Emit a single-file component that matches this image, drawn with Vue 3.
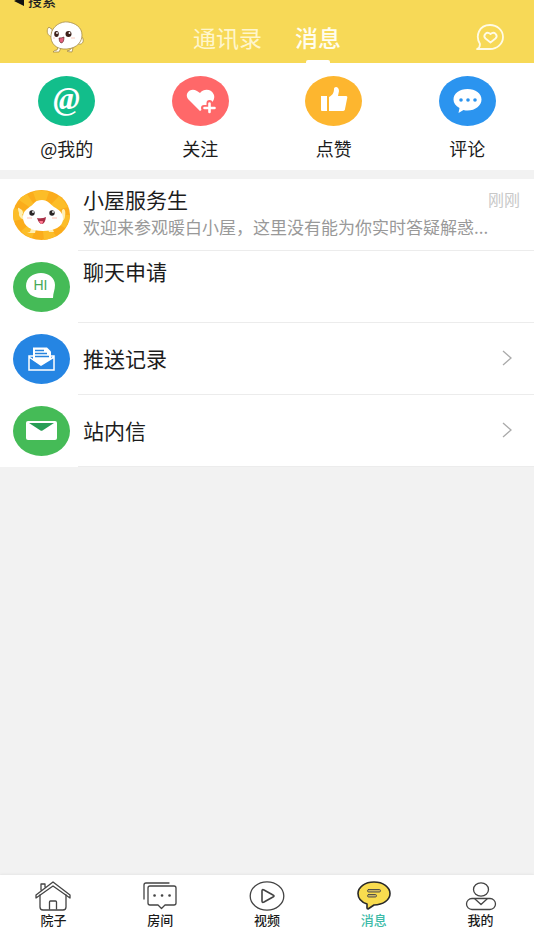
<template>
  <div class="page">
    <header class="header">
      <div class="status"><span class="back-mark"></span><span class="back-text">搜索</span></div>
      <div class="nav-bar">
        <button class="mascot-btn" type="button" aria-label="暖白小屋">
          <svg width="40" height="34" viewBox="0 0 40 34">
            <g fill="#fffdf5" stroke="#a68c45" stroke-width="0.8">
              <path d="M7 17C3 16 1 12 3 8q1-2 2 0l2 1q1 3-1 4l3 3zM34 18q4-2 4 1c1 3-1 6-5 5zM13 27l-1 3q-3 0-4 2h6l2-4zM26 28l-1 2-3 1q1 1 5 1l1-4z" />
              <path d="M6 15C7 6 16 1 23 2s14 5 14 13c0 6-4 13-15 14S5 23 6 15z" fill="#fff" />
            </g>
            <ellipse cx="11.500" cy="14" rx="2.300" ry="2.900" fill="#3b2019" />
            <ellipse cx="23.500" cy="14" rx="3" ry="2.900" fill="#3b2019" />
            <circle cx="12" cy="13" r=".9" fill="#fff" />
            <circle cx="24.500" cy="13" r="1" fill="#fff" />
            <path d="M14 18q3 0 5-1 0 6-3 6-2-1-2-5z" fill="#e0607c" stroke="#54211f" stroke-width=".6" />
            <path d="M26 18h4M8 18h2" stroke="#f8c8bc" />
          </svg>
        </button>
        <nav class="top-tabs">
          <button
            v-for="tab in topTabs"
            :key="tab"
            type="button"
            class="top-tab"
            :class="{ active: tab === activeTop }"
            @click="activeTop = tab"
          >
            {{ tab }}
          </button>
        </nav>
        <button class="heart-btn" type="button" aria-label="心动消息">
          <svg width="28" height="26" viewBox="0 0 28 26" fill="none" stroke="#fffbe5" stroke-width="1.8" stroke-linejoin="round" stroke-linecap="round">
            <path d="M4 20C-1 12 3 1 14 1c7 0 13 5 13 12s-6 12-13 12H1q3-1 3-5z" />
            <path d="M14.500 18.500l-5-4c-3-3 1-8 5-4.500 4-3.500 8 1.500 5 4.500z" />
          </svg>
        </button>
      </div>
    </header>

    <section class="shortcuts">
      <button v-for="item in shortcuts" :key="item.label" type="button" class="shortcut">
        <svg width="57" height="50" viewBox="0 0 57 50">
          <ellipse cx="28.500" cy="25" rx="28.500" ry="25" :fill="item.color" />
          <text v-if="item.icon === 'at'" x="28.500" y="33" class="at-sign">@</text>
          <g v-else-if="item.icon === 'heart'">
            <path d="M28 35L16 23c-4-6 3-12 9-8l3 2c4-5 12-4 14 2 1 4-1 7-4 9z" fill="#fff" />
            <path d="M37.500 27v10M32 32h11" stroke="#ff6869" stroke-width="6" stroke-linecap="round" />
            <path d="M37.500 27.500v8.500M32.500 32h10" stroke="#fff" stroke-width="2.600" stroke-linecap="round" />
          </g>
          <g v-else-if="item.icon === 'thumb'" fill="#fff">
            <path d="M16 20h6v15h-5q-1 0-1-1z" />
            <path d="M24 21c4-2 5-5 5-8 0-3 5-3 5 2l-1 5h8q2 0 1 3l-2 10q0 2-3 2H24z" />
          </g>
          <g v-else>
            <path d="M28.500 13c8 0 14 4.500 14 10.500s-6 11-14 11q-2 0-4-.5l-5 3 1-5c-4-2-6-5-6-8.500C14.500 17.500 20.500 13 28.500 13z" fill="#fff" />
            <g :fill="item.color">
              <circle cx="22" cy="24" r="1.800" />
              <circle cx="29" cy="24" r="1.800" />
              <circle cx="36" cy="24" r="1.800" />
            </g>
          </g>
        </svg>
        <span>{{ item.label }}</span>
      </button>
    </section>

    <ul class="list">
      <li v-for="row in rows" :key="row.title">
        <button type="button" class="row">
          <svg class="avatar" width="57" height="50" viewBox="0 0 57 50">
            <ellipse cx="28.500" cy="25" rx="28.500" ry="25" :fill="row.color" />
            <g v-if="row.icon === 'mascot'">
              <path d="M28 25L20 2q8-3 16 0zM28 25L46 6q6 5 9 11zM28 25l29 0q-1 8-5 13zM28 25l15 21q-6 3-12 4zM28 25L19 48q-7-2-11-7zM28 25L1 31q-2-7 0-13zM28 25L6 10q3-4 8-6z" fill="#fcbd28" />
              <g fill="#ffeeb0">
                <path d="M11 30q-6-3-5-7-2-6 0-5l3 2q2 3 0 5l3 2zM47 28l2-4q-1-5 2-5 2 2 1 7 0 5-5 6z" />
                <path d="M18 39l-1 3-3 1h8l1-4zM35 39l1 3h5l-2-4z" />
              </g>
              <path d="M10 27c0-6 4-8 8-11 3-2 4-6 11-6 6 0 8 4 12 7 5 3 9 5 9 12 0 8-9 12-20 12S10 37 10 27z" fill="#fff" />
              <circle cx="19" cy="23" r="2.700" fill="#2a2425" />
              <circle cx="39" cy="23" r="2.700" fill="#2a2425" />
              <circle cx="20" cy="22" r=".9" fill="#fff" />
              <circle cx="40" cy="22" r=".9" fill="#fff" />
              <path d="M24 28q5 1 9-1-1 7-4 7-3 0-5-6z" fill="#a92d45" />
              <path d="M26 31h4q0 3-2 3z" fill="#ff7b93" />
              <path d="M14 28h5M39 28h5" stroke="#ffd4cc" stroke-width="1.500" />
            </g>
            <g v-else-if="row.icon === 'hi'">
              <path d="M28 11c8 0 14 5 14 12 0 5-2 8-2 13H28c-8 0-15-5-15-12 0-8 7-13 15-13z" fill="#fff" />
              <text x="27.500" y="28" class="hi-text">HI</text>
            </g>
            <g v-else-if="row.icon === 'push'">
              <path d="M20 13.500h14l4 4V25l-10 6-8-5z" fill="#fff" />
              <path d="M22 16.500h9M22 19.500h12M22 22.500h14" stroke="#2783dd" stroke-width="1.300" />
              <path d="M20 22h-4v14h25V22h-3M16 23l12 8 13-8" fill="none" stroke="#fff" stroke-width="1.500" />
            </g>
            <g v-else>
              <rect x="13" y="15" width="31" height="19" rx="2" fill="#fff" />
              <path d="M16 17h25L29.500 24.500q-1 .5-2 0z" fill="#279e55" />
            </g>
          </svg>
          <span class="row-body">
            <span class="row-text">
              <span class="row-title">
                <span>{{ row.title }}</span>
                <time v-if="row.time" class="row-time">{{ row.time }}</time>
              </span>
              <span v-if="!row.arrow" class="row-preview">{{ row.preview }}</span>
            </span>
            <svg v-if="row.arrow" class="arrow" width="10" height="16" viewBox="0 0 10 16" fill="none" stroke="#aaa" stroke-width="1.300">
              <path d="M1 1l8 7-8 7" />
            </svg>
          </span>
        </button>
      </li>
    </ul>

    <nav class="tab-bar">
      <button
        v-for="tab in tabs"
        :key="tab.label"
        type="button"
        class="tab"
        :class="{ active: tab.label === activeTab }"
        @click="activeTab = tab.label"
      >
        <svg width="36" height="30" viewBox="0 0 36 30" fill="none" stroke="#444" stroke-width="1.300" stroke-linejoin="round" stroke-linecap="round">
          <g v-if="tab.icon === 'home'">
            <path d="M5 14v12q0 3 3 3h20q3 0 3-3V14" />
            <path d="M1 14L18 1l17 13v3L18 5 1 17zM6 9V3h4v3" />
            <path d="M14.500 28v-7q0-1 1-1h5q1 0 1 1v7" />
          </g>
          <g v-else-if="tab.icon === 'room'">
            <path d="M2 18V4q0-2 2-2h23" />
            <path d="M8 5h24q2 0 2 2v15q0 2-2 2h-9l-3.500 3.500L16 24H8q-2 0-2-2V7q0-2 2-2z" />
            <path d="M12.500 14.500h.1M20 14.500h.1M27.500 14.500h.1" stroke-width="2.600" />
          </g>
          <g v-else-if="tab.icon === 'video'">
            <ellipse cx="18" cy="15" rx="16.800" ry="14.200" />
            <path d="M13 10q0-2 2-1l9 5q2 1 0 2l-9 5q-2 1-2-1z" stroke-width="1.600" />
          </g>
          <g v-else-if="tab.icon === 'message'">
            <path d="M18 1c9 0 16 5 16 11.500S27 24 18 24l-6 4q-1 0-1-1v-4C5 21 2 17 2 12.500 2 6 9 1 18 1z" fill="#f9dc4f" stroke="#292929" stroke-width="1.600" />
            <rect x="11.500" y="8.500" width="13" height="2.500" rx="1.200" fill="#c9b568" stroke-width=".9" />
            <rect x="11.500" y="13.500" width="9" height="2.500" rx="1.200" fill="#c9b568" stroke-width=".9" />
          </g>
          <g v-else>
            <ellipse cx="18" cy="8.500" rx="7.500" ry="6.700" />
            <rect x="3.500" y="17.500" width="29" height="11" rx="5.500" />
            <path d="M12 18l6 5.500 6-5.500" />
          </g>
        </svg>
        <span>{{ tab.label }}</span>
      </button>
    </nav>
  </div>
</template>

<script setup>
import { ref } from "vue";

const topTabs = ["通讯录", "消息"];
const activeTop = ref("消息");
const activeTab = ref("消息");

const shortcuts = [
  { label: "@我的", icon: "at", color: "#12be8b" },
  { label: "关注", icon: "heart", color: "#ff6869" },
  { label: "点赞", icon: "thumb", color: "#fdb62f" },
  { label: "评论", icon: "comment", color: "#2b94ef" },
];

const rows = [
  {
    title: "小屋服务生",
    preview: "欢迎来参观暖白小屋，这里没有能为你实时答疑解惑...",
    time: "刚刚",
    icon: "mascot",
    color: "#fbac1b",
  },
  { title: "聊天申请", preview: "", icon: "hi", color: "#45bb57" },
  { title: "推送记录", icon: "push", color: "#2585e3", arrow: true },
  { title: "站内信", icon: "mail", color: "#45bb57", arrow: true },
];

const tabs = [
  { label: "院子", icon: "home" },
  { label: "房间", icon: "room" },
  { label: "视频", icon: "video" },
  { label: "消息", icon: "message" },
  { label: "我的", icon: "mine" },
];
</script>

<style>
body {
  margin: 0;
  background: #f2f2f2;
}
</style>

<style scoped>
.page {
  display: flex;
  flex-direction: column;
  min-height: 100vh;
  color: #1c1c1c;
  font-family: "Noto Sans CJK SC", sans-serif;
}
button {
  border: 0;
  padding: 0;
  margin: 0;
  background: none;
  color: inherit;
  font: inherit;
  cursor: pointer;
}
svg {
  display: block;
  flex-shrink: 0;
}
.header {
  background: #f7d957;
}
/* scrolled half out of view, only the lower edge shows */
.status {
  display: flex;
  align-items: flex-end;
  gap: 4px;
  height: 10px;
  padding-left: 14px;
  font-size: 14px;
  line-height: 20px;
  font-weight: 500;
  color: #222;
}
.back-mark {
  align-self: flex-start;
  border: 5px solid transparent;
  border-left: 0;
  border-right: 10px solid #111;
  margin-top: -4px;
}
.nav-bar {
  display: grid;
  grid-template-columns: 1fr auto 1fr;
  align-items: center;
  height: 53px;
  padding: 0 30px 0 45px;
}
.mascot-btn {
  justify-self: start;
}
.heart-btn {
  justify-self: end;
}
.top-tabs {
  display: flex;
  align-self: stretch;
  gap: 33px;
  margin-right: 15px;
}
.top-tab {
  display: flex;
  flex-direction: column;
  align-items: center;
  justify-content: space-between;
  padding-top: 9px;
  font-size: 23px;
  line-height: 36px;
  color: #fff6cc;
}
.top-tab::after {
  content: "";
  width: 24px;
  height: 3px;
  border-radius: 2px 2px 0 0;
}
.top-tab.active {
  color: #fffdf0;
  font-weight: 500;
}
.top-tab.active::after {
  background: #fff;
}
.shortcuts {
  display: grid;
  grid-template-columns: repeat(4, 1fr);
  padding: 13px 0 8px;
  background: #fff;
}
.shortcut {
  display: flex;
  flex-direction: column;
  align-items: center;
  gap: 8px;
  font-size: 18px;
  line-height: 28px;
}
.at-sign {
  fill: #fff;
  font-family: "Liberation Serif", serif;
  font-size: 32px;
  font-weight: bold;
  font-style: italic;
  text-anchor: middle;
}
.list {
  margin: 9px 0 0;
  padding: 0;
  list-style: none;
  background: #fff;
}
.row {
  display: flex;
  align-items: center;
  width: 100%;
  padding-left: 13px;
  text-align: left;
}
.row-body {
  display: flex;
  flex: 1;
  align-items: center;
  min-width: 0;
  height: 69px;
  margin-left: 8px;
  padding: 0 14px 2px 5px;
  border-bottom: 1px solid #ececec;
}
.row-text {
  flex: 1;
  min-width: 0;
}
.row-title {
  display: flex;
  justify-content: space-between;
  font-size: 21px;
  line-height: 26px;
}
.row-time {
  font-size: 16px;
  color: #c8c8c8;
}
.row-preview {
  display: block;
  height: 30px;
  overflow: hidden;
  font-size: 17px;
  line-height: 30px;
  color: #999;
  white-space: nowrap;
  text-overflow: ellipsis;
}
.arrow {
  margin-right: 8px;
}
.hi-text {
  fill: #45a957;
  font-family: "Liberation Sans", sans-serif;
  font-size: 14px;
  text-anchor: middle;
}
.tab-bar {
  display: grid;
  grid-template-columns: repeat(5, 1fr);
  margin-top: auto;
  padding: 6px 0 21px;
  background: #fff;
  box-shadow: 0 -1px 2px #e6e6e6;
}
.tab {
  display: flex;
  flex-direction: column;
  align-items: center;
  font-size: 13px;
  line-height: 18px;
  font-weight: 500;
}
.tab.active {
  color: #3dbba8;
}
</style>
